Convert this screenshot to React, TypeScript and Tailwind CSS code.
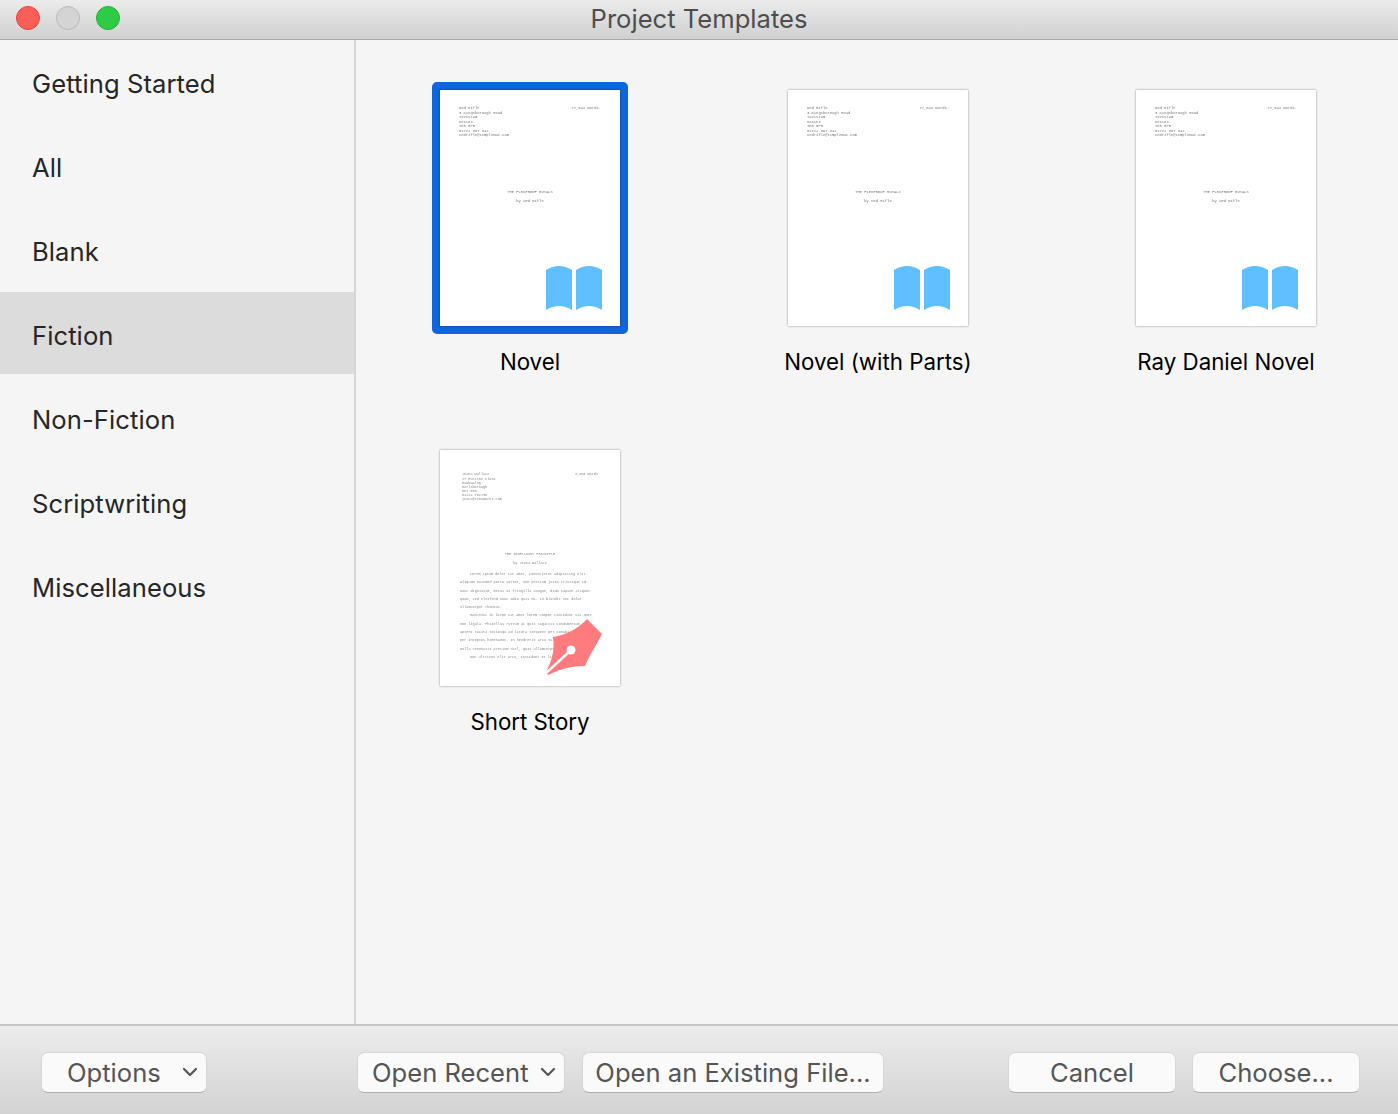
import { ChevronDown } from 'lucide-react';

const categories = ['Getting Started', 'All', 'Blank', 'Fiction', 'Non-Fiction', 'Scriptwriting', 'Miscellaneous'];

const BookIcon = () => (
  <svg width="56" height="44" viewBox="0 0 56 44" className="absolute right-[18px] bottom-[16px]">
    <path d="M0 4Q13-4 26 4V44Q13 36 0 44Z" fill="#5fbfff" />
    <path d="M30 4Q43-4 56 4V44Q43 36 30 44Z" fill="#5fbfff" />
  </svg>
);

const PenIcon = () => (
  <svg width="62" height="62" viewBox="540 616 62 62" className="absolute right-[18px] bottom-[9px]">
    <path d="M587 620L602 635C597 645 590 655 585 667C572 667 560 670 548 676L546 673C552 662 555 650 553 638C566 636 578 630 587 620Z" fill="#ff7b7e" />
    <path d="M545 675L571 651" stroke="#fff" strokeWidth="2.4" />
    <circle cx="571" cy="651" r="4.5" fill="#fff" />
  </svg>
);

const NovelPage = () => (
  <div className="relative w-[180px] h-[236px] bg-white shadow-[0_0_2px_rgba(0,0,0,0.45)] font-['Liberation_Mono',monospace] text-[3.8px] leading-[4.5px] text-[#777] pl-[19px] pr-[19px] pt-[16px] whitespace-pre">
    <div className="blur-[0.35px]">
      <div className="flex justify-between">
        <div>
          <div>Ned Rifle</div>
          <div>3 Kingsborough Road</div>
          <div>Tavistam</div>
          <div>Kessex</div>
          <div>TE5 5PR</div>
          <div>01722 897 342</div>
          <div>nedrifle@simplemac.com</div>
        </div>
        <div>77,644 words.</div>
      </div>
      <div className="text-center mt-[52px]">THE FLEDPROOF ROYALS</div>
      <div className="text-center mt-[5px]">by Ned Rifle</div>
    </div>
    <BookIcon />
  </div>
);

const ShortStoryPage = () => (
  <div className="relative w-[180px] h-[236px] bg-white shadow-[0_0_2px_rgba(0,0,0,0.45)] font-['Liberation_Mono',monospace] text-[3.5px] text-[#888] pl-[22px] pr-[22px] pt-[22px] whitespace-pre">
    <div className="blur-[0.35px]">
      <div className="flex justify-between leading-[4px]">
        <div>
          <div className="mb-[1px]">Jeana Wallace</div>
          <div>17 Hurston Close</div>
          <div>Hawkwalng</div>
          <div>Marlsborough</div>
          <div>MK7 5TB</div>
          <div>01111 782736</div>
          <div>jeana@simsworks.com</div>
        </div>
        <div>3,460 words</div>
      </div>
      <div className="text-center mt-[51px] leading-[4px]">THE INCESSAINT PRINCIPLE</div>
      <div className="text-center mt-[5px] leading-[4px]">by Jeana Wallace</div>
      <div className="-ml-[2px] -mr-[4px] mt-[5px] leading-[8.3px]">
        <div className="pl-[10px]">Lorem ipsum dolor sit amet, consectetur adipiscing elit.</div>
        <div>Aliquam euismod porta tortor, non pretium justo tristique id.</div>
        <div>Nunc dignissim, metus at fringilla congue, diam sapien aliquet</div>
        <div>quam, sed eleifend nunc odio quis mi. In blandit nec dolor</div>
        <div>ullamcorper rhoncus.</div>
        <div className="pl-[10px]">Maecenas in lorem sit amet lorem tempor tincidunt sit amet</div>
        <div>non ligula. Phasellus rutrum ac quis sagittis condimentum.</div>
        <div>aptent taciti sociosqu ad litora torquent per conubia nostra,</div>
        <div>per inceptos himenaeos. In hendrerit arcu vulputate vulputate</div>
        <div>Nulla venenatis pretium nisl, quis ullamcorper mi dictum a.</div>
        <div className="pl-[10px]">Non ultrices elit arcu, tincidunt et libero.</div>
      </div>
    </div>
    <PenIcon />
  </div>
);

const FooterButton = ({ label, className, chevron }: { label: string; className: string; chevron?: string }) => (
  <button className={`h-[41px] flex items-center rounded-[7px] bg-[#fafafa] border border-[#d6d6d6] border-b-[#b0b0b0] text-[#555] text-[25.6px] leading-none whitespace-nowrap ${className}`}>
    <span className="pt-[2px]">{label}</span>
    {chevron && <ChevronDown size={24} strokeWidth={2.2} className={chevron} />}
  </button>
);

export default function App() {
  return (
    <div className="w-[1398px] h-[1114px] flex flex-col overflow-hidden bg-[#f5f5f5] font-['Inter',sans-serif]">
      <div className="relative h-[40px] shrink-0 flex items-center justify-center bg-gradient-to-b from-[#ebebeb] to-[#d0d0d0] border-b border-[#a8a8a8]">
        <div className="absolute left-[16px] top-[6px] flex gap-[16px]">
          <div className="w-[24px] h-[24px] rounded-full bg-[#fd5f58] border border-[#e2463f]" />
          <div className="w-[24px] h-[24px] rounded-full bg-[#d4d4d4] border border-[#b8b8b8]" />
          <div className="w-[24px] h-[24px] rounded-full bg-[#2ecb47] border border-[#27ad3a]" />
        </div>
        <span className="text-[25.6px] leading-none text-[#4d4d4d] -mt-[2px]">Project Templates</span>
      </div>

      <div className="flex-1 flex min-h-0">
        <div className="w-[356px] shrink-0 border-r-2 border-[#d6d6d6] flex flex-col gap-[2px]">
          {categories.map((name) => (
            <div
              key={name}
              className={`h-[82px] flex items-center pl-[32px] pt-[6px] text-[25.6px] tracking-[0.003em] leading-none text-[#262626] ${name === 'Fiction' ? 'bg-[#dcdcdc]' : ''}`}
            >
              {name}
            </div>
          ))}
        </div>

        <div className="flex-1 grid grid-cols-[348px_348px_348px] auto-rows-[360px] pt-[50px] text-[22.3px] leading-[28px] text-black">
          <div className="flex flex-col items-center">
            <div className="rounded-[5px] border-[8px] border-[#0f65dc] -mt-[8px]">
              <NovelPage />
            </div>
            <span className="mt-[14px]">Novel</span>
          </div>
          <div className="flex flex-col items-center">
            <NovelPage />
            <span className="mt-[22px]">Novel (with Parts)</span>
          </div>
          <div className="flex flex-col items-center">
            <NovelPage />
            <span className="mt-[22px]">Ray Daniel Novel</span>
          </div>
          <div className="flex flex-col items-center">
            <ShortStoryPage />
            <span className="mt-[22px]">Short Story</span>
          </div>
        </div>
      </div>

      <div className="h-[90px] shrink-0 flex items-center pl-[41px] pt-[4px] bg-gradient-to-b from-[#ececec] to-[#d3d3d3] border-t-2 border-[#c8c8c8]">
        <FooterButton label="Options" className="w-[166px] pl-[25px]" chevron="ml-[17px]" />
        <FooterButton label="Open Recent" className="w-[208px] ml-[150px] pl-[14px]" chevron="ml-[7px]" />
        <FooterButton label="Open an Existing File..." className="w-[302px] ml-[17px] justify-center" />
        <FooterButton label="Cancel" className="w-[168px] ml-[124px] justify-center" />
        <FooterButton label="Choose..." className="w-[168px] ml-[16px] justify-center" />
      </div>
    </div>
  );
}
